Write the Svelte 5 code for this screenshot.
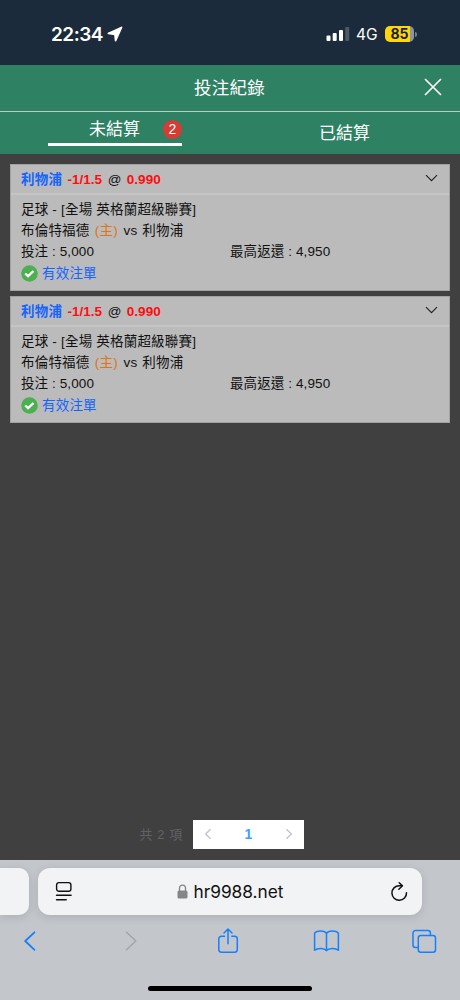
<script lang="ts">
	type Bet = {
		id: number;
		pick: string;
		handicap: string;
		odds: string;
		league: string;
		home: string;
		away: string;
		stake: string;
		payout: string;
	};

	const bet = {
		pick: '利物浦',
		handicap: '-1/1.5',
		odds: '0.990',
		league: '足球 - [全場 英格蘭超級聯賽]',
		home: '布倫特福德',
		away: '利物浦',
		stake: '5,000',
		payout: '4,950'
	};

	const bets: Bet[] = [
		{ id: 1, ...bet },
		{ id: 2, ...bet }
	];

	let tab = $state('open');
</script>

<div class="screen">
	<div class="status">
		<div class="status__time">
			<span>22:34</span>
			<svg width="16" height="16" viewBox="0 0 16 16" aria-hidden="true">
				<path d="M14.5 1.4 1.3 7.4l6.6.9.7 6.3Z" fill="#fff" stroke="#fff" stroke-width="1.7" stroke-linejoin="round" />
			</svg>
		</div>
		<div class="status__right">
			<svg class="signal" width="24" height="16" viewBox="0 0 24 16" aria-hidden="true">
				<rect x="0.5" y="9.5" width="4" height="5.5" rx="1.1" fill="#fff" />
				<rect x="6.7" y="7" width="4" height="8" rx="1.1" fill="#fff" />
				<rect x="13" y="4" width="4" height="11" rx="1.1" fill="#fff" />
				<rect x="19.2" y="1" width="4" height="14" rx="1.1" fill="#4d5965" />
			</svg>
			<span class="network">4G</span>
			<span class="battery"><b>85</b></span>
			<span class="battery-tip"></span>
		</div>
	</div>

	<header class="header">
		<h1>投注紀錄</h1>
		<button class="close" type="button" aria-label="關閉">
			<svg width="18" height="18" viewBox="0 0 18 18">
				<path d="M1 1 17 17M17 1 1 17" stroke="#fff" stroke-width="1.7" />
			</svg>
		</button>
	</header>

	<nav class="tabs">
		<button class="tab" class:tab--active={tab === 'open'} type="button" onclick={() => (tab = 'open')}>
			<span class="tab__label">未結算</span>
			<span class="badge">{bets.length}</span>
		</button>
		<button class="tab" class:tab--active={tab === 'settled'} type="button" onclick={() => (tab = 'settled')}>
			<span class="tab__label">已結算</span>
		</button>
	</nav>

	<main class="content">
		{#each bets as b (b.id)}
			<article class="card">
				<div class="card__head">
					<span class="pick">{b.pick}</span>
					<span class="red">{b.handicap}</span>
					<span class="at">@</span>
					<span class="red">{b.odds}</span>
					<svg class="chevron" width="13" height="8" viewBox="0 0 13 8" aria-hidden="true">
						<path d="M1 1.2 6.5 6.6 12 1.2" fill="none" stroke="#222" stroke-width="1.15" />
					</svg>
				</div>
				<div class="card__body">
					<div class="row">{b.league}</div>
					<div class="row row--teams">{b.home} <span class="host">(主)</span> vs {b.away}</div>
					<div class="row row--split">
						<span class="num">投注 : {b.stake}</span>
						<span class="num">最高返還 : {b.payout}</span>
					</div>
					<div class="row row--valid">
						<svg width="17" height="17" viewBox="0 0 17 17" aria-hidden="true">
							<circle cx="8.5" cy="8.5" r="8.3" fill="#4caf50" />
							<path d="m4.2 8.5 2.9 2.7 5.4-5.2" fill="none" stroke="#fff" stroke-width="2.3" />
						</svg>
						<span>有效注單</span>
					</div>
				</div>
			</article>
		{/each}

		<div class="pagination">
			<span class="total">共 2 項</span>
			<div class="pager">
				<svg width="8" height="12" viewBox="0 0 8 12"><path d="M6.6 1.2 1.6 6l5 4.8" /></svg>
				<b>1</b>
				<svg width="8" height="12" viewBox="0 0 8 12"><path d="M1.4 1.2 6.4 6l-5 4.8" /></svg>
			</div>
		</div>
	</main>

	<footer class="browser">
		<div class="address-row">
			<div class="prev-tab"></div>
			<div class="address">
				<svg class="reader" width="18" height="21" viewBox="0 0 18 21" fill="none" stroke="#111" stroke-linecap="round">
					<rect x="1.6" y="1.6" width="14.3" height="8.6" rx="2.3" stroke-width="1.4" />
					<path d="M1.5 14.3h14.6M1.5 18.7h9.7" stroke-width="1.4" />
				</svg>
				<div class="url">
					<svg width="11" height="15" viewBox="0 0 11 15" aria-hidden="true">
						<rect x="0.5" y="6.5" width="10" height="8" rx="1.5" fill="#858589" />
						<path d="M2.5 7V4.2C2.5 2.2 3.7 1.1 5.5 1.1s3 1.1 3 3.1V7" fill="none" stroke="#858589" stroke-width="1.3" />
					</svg>
					<span>hr9988.net</span>
				</div>
				<svg class="reload" width="18" height="20" viewBox="0 0 18 20" fill="none" stroke="#111" stroke-width="1.5" stroke-linecap="round" stroke-linejoin="round">
					<path d="M16.5 10.7a7.3 7.3 0 1 1-7.3-7h2.8" />
					<path d="m9.2.8 3.2 3-3.5 3.4" />
				</svg>
			</div>
		</div>
		<div class="toolbar">
			<svg width="28" height="28" viewBox="0 0 28 28"><path d="M18.5 5.3 9.2 14l9.3 8.8" stroke-width="1.8" /></svg>
			<svg class="disabled" width="28" height="28" viewBox="0 0 28 28"><path d="m11.5 5.3 9.3 8.7-9.3 8.8" /></svg>
			<svg width="28" height="28" viewBox="0 0 28 28">
				<path d="M11.5 9.2H8.5a2.7 2.7 0 0 0-2.7 2.7v10.6a2.7 2.7 0 0 0 2.7 2.7h13.1a2.7 2.7 0 0 0 2.7-2.7V11.9a2.7 2.7 0 0 0-2.7-2.7h-2.8" />
				<path d="M15 16.8V2M11 6l4-4 4 4" />
			</svg>
			<svg width="28" height="28" viewBox="0 0 28 28">
				<path d="M14.5 6.3C12.5 3.4 5.6 2.9 2.6 6v17.3c3-2.7 9.6-2.5 11.9.3 2.3-2.8 8.9-3 11.9-.3V6C23.4 2.9 16.5 3.4 14.5 6.3Zm0 0v17.3" />
			</svg>
			<svg width="28" height="28" viewBox="0 0 28 28">
				<path d="M8.3 20.5H5.5A2.5 2.5 0 0 1 3 18V6a2.5 2.5 0 0 1 2.5-2.5h12.4a2.5 2.5 0 0 1 2.5 2.5v2.5" />
				<rect x="8.3" y="8.5" width="17.2" height="16.8" rx="2.5" />
			</svg>
		</div>
		<div class="home"></div>
	</footer>
</div>

<style>
	:global(body) {
		margin: 0;
	}

	.screen {
		display: flex;
		flex-direction: column;
		width: 460px;
		height: 1000px;
		overflow: hidden;
		background: #404040;
		font-family: 'Liberation Sans', 'Noto Sans CJK TC', sans-serif;
		color: #111;
	}

	svg {
		display: block;
		flex: none;
	}

	button {
		padding: 0;
		border: 0;
		background: none;
		color: inherit;
		font: inherit;
		cursor: pointer;
	}

	.status {
		display: flex;
		justify-content: space-between;
		box-sizing: border-box;
		height: 65px;
		padding: 23px 43px 0 51px;
		background: #1c2b3b;
		color: #fff;
		font-family: Inter, sans-serif;
	}

	.status__time {
		display: flex;
		align-items: center;
		gap: 4px;
		height: 22px;
		font-size: 19px;
		font-weight: 600;
		letter-spacing: -0.5px;
	}

	.status__right {
		display: flex;
		align-items: center;
		height: 22px;
	}

	.network {
		margin: 1px 0 0 6px;
		width: 29px;
		font-size: 15.5px;
	}

	.battery {
		display: flex;
		align-items: center;
		justify-content: center;
		width: 29px;
		height: 16px;
		border-radius: 5px;
		background: linear-gradient(to right, #ffd60a 25px, #8e969d 25px);
		color: #17202a;
		font-size: 14px;
		line-height: 16px;
	}

	.battery-tip {
		width: 2px;
		height: 5px;
		margin-left: 1px;
		border-radius: 0 2px 2px 0;
		background: #747f88;
	}

	.header {
		display: grid;
		grid-template-columns: 1fr auto 1fr;
		align-items: center;
		box-sizing: border-box;
		height: 47px;
		padding-right: 18px;
		border-bottom: 1px solid #b4d1c4;
		background: #2f8164;
		color: #fff;
	}

	h1 {
		grid-column: 2;
		margin: 0 0 4px 17px;
		font-size: 17.5px;
		font-weight: 400;
		letter-spacing: 0.3px;
	}

	.close {
		justify-self: end;
		margin-bottom: 2px;
	}

	.tabs {
		display: flex;
		height: 42px;
		background: #2f8164;
		color: #fff;
		font-size: 17px;
	}

	.tab {
		position: relative;
		display: flex;
		flex: 1;
		align-items: center;
		justify-content: center;
	}

	.tab__label {
		margin: 0 1px 4px 0;
	}

	.tab--active::after {
		content: '';
		position: absolute;
		left: 48px;
		bottom: 8px;
		width: 134px;
		height: 3px;
		background: #fff;
	}

	.tab--active .tab__label {
		margin-bottom: 11px;
	}

	.badge {
		position: absolute;
		left: 163px;
		top: 8px;
		width: 19px;
		height: 19px;
		border-radius: 50%;
		background: #d63b34;
		font-size: 14px;
		line-height: 19px;
	}

	.content {
		display: flex;
		flex: 1;
		flex-direction: column;
		gap: 5px;
		padding: 10px 10px 0;
	}

	.card {
		box-sizing: border-box;
		height: 127px;
		border: 1px solid #a2a2a2;
		background: #bbb;
		font-size: 13.5px;
	}

	.card__head {
		display: flex;
		align-items: baseline;
		gap: 5.5px;
		box-sizing: border-box;
		height: 30px;
		padding: 3px 11px 0 10px;
		border-bottom: 2px solid #c5c5c5;
		font-weight: 700;
	}

	.pick {
		color: #1464ff;
		letter-spacing: 0.2px;
	}

	.red {
		color: #ff0d10;
	}

	.card__head .at {
		font-weight: 400;
	}

	.chevron {
		align-self: flex-start;
		margin: 6px 0 0 auto;
	}

	.card__body {
		padding: 4px 10px 0;
	}

	.row {
		height: 21px;
		line-height: 21px;
		letter-spacing: 0.2px;
		white-space: pre;
	}

	.row--teams {
		word-spacing: 0.8px;
	}

	.row--split {
		display: grid;
		grid-template-columns: 1fr 1fr;
	}

	.num {
		letter-spacing: 0.1px;
	}

	.host {
		margin: 0 1px 0 0.5px;
		color: #df7414;
	}

	.row--valid {
		display: flex;
		align-items: center;
		gap: 4px;
		height: 23px;
		color: #1464ff;
	}

	.pagination {
		display: flex;
		align-items: center;
		margin: auto 0 11px 129.5px;
		gap: 10px;
	}

	.total {
		margin-bottom: 3px;
		color: #606266;
		font-size: 13px;
		letter-spacing: 0.6px;
	}

	.pager {
		display: flex;
		align-items: center;
		justify-content: space-between;
		box-sizing: border-box;
		width: 111px;
		height: 29px;
		padding: 0 11px;
		background: #fff;
		color: #409eff;
		font-size: 14px;
	}

	.pager b,
	.pager svg {
		margin-bottom: 1px;
	}

	.pager path {
		fill: none;
		stroke: #c0c4cc;
		stroke-width: 1.4;
	}

	.browser {
		display: flex;
		flex-direction: column;
		box-sizing: border-box;
		height: 140px;
		padding-top: 8px;
		background: #c3c7cc;
	}

	.address-row {
		display: flex;
		gap: 9px;
	}

	.prev-tab {
		width: 29px;
		height: 47px;
		border-radius: 0 10px 10px 0;
		background: #f2f3f5;
		box-shadow: 0 2px 10px rgb(0 0 0 / 0.12);
	}

	.address {
		display: flex;
		align-items: center;
		justify-content: space-between;
		box-sizing: border-box;
		width: 384px;
		height: 47px;
		padding: 0 14px 0 17px;
		border-radius: 12px;
		background: #f2f3f5;
		box-shadow: 0 2px 10px rgb(0 0 0 / 0.12);
	}

	.url {
		display: flex;
		align-items: center;
		gap: 5px;
		margin-right: 2px;
		font-family: Inter, sans-serif;
		font-size: 17.3px;
	}

	.toolbar {
		display: flex;
		justify-content: space-between;
		padding: 12px 22px 0 16px;
	}

	.toolbar svg {
		fill: none;
		stroke: #1680fb;
		stroke-width: 1.5;
		stroke-linecap: round;
		stroke-linejoin: round;
	}

	.toolbar .disabled {
		stroke: #a2a6aa;
	}

	.home {
		width: 164px;
		height: 5px;
		margin: auto auto 9px;
		border-radius: 3px;
		background: #000;
	}
</style>
